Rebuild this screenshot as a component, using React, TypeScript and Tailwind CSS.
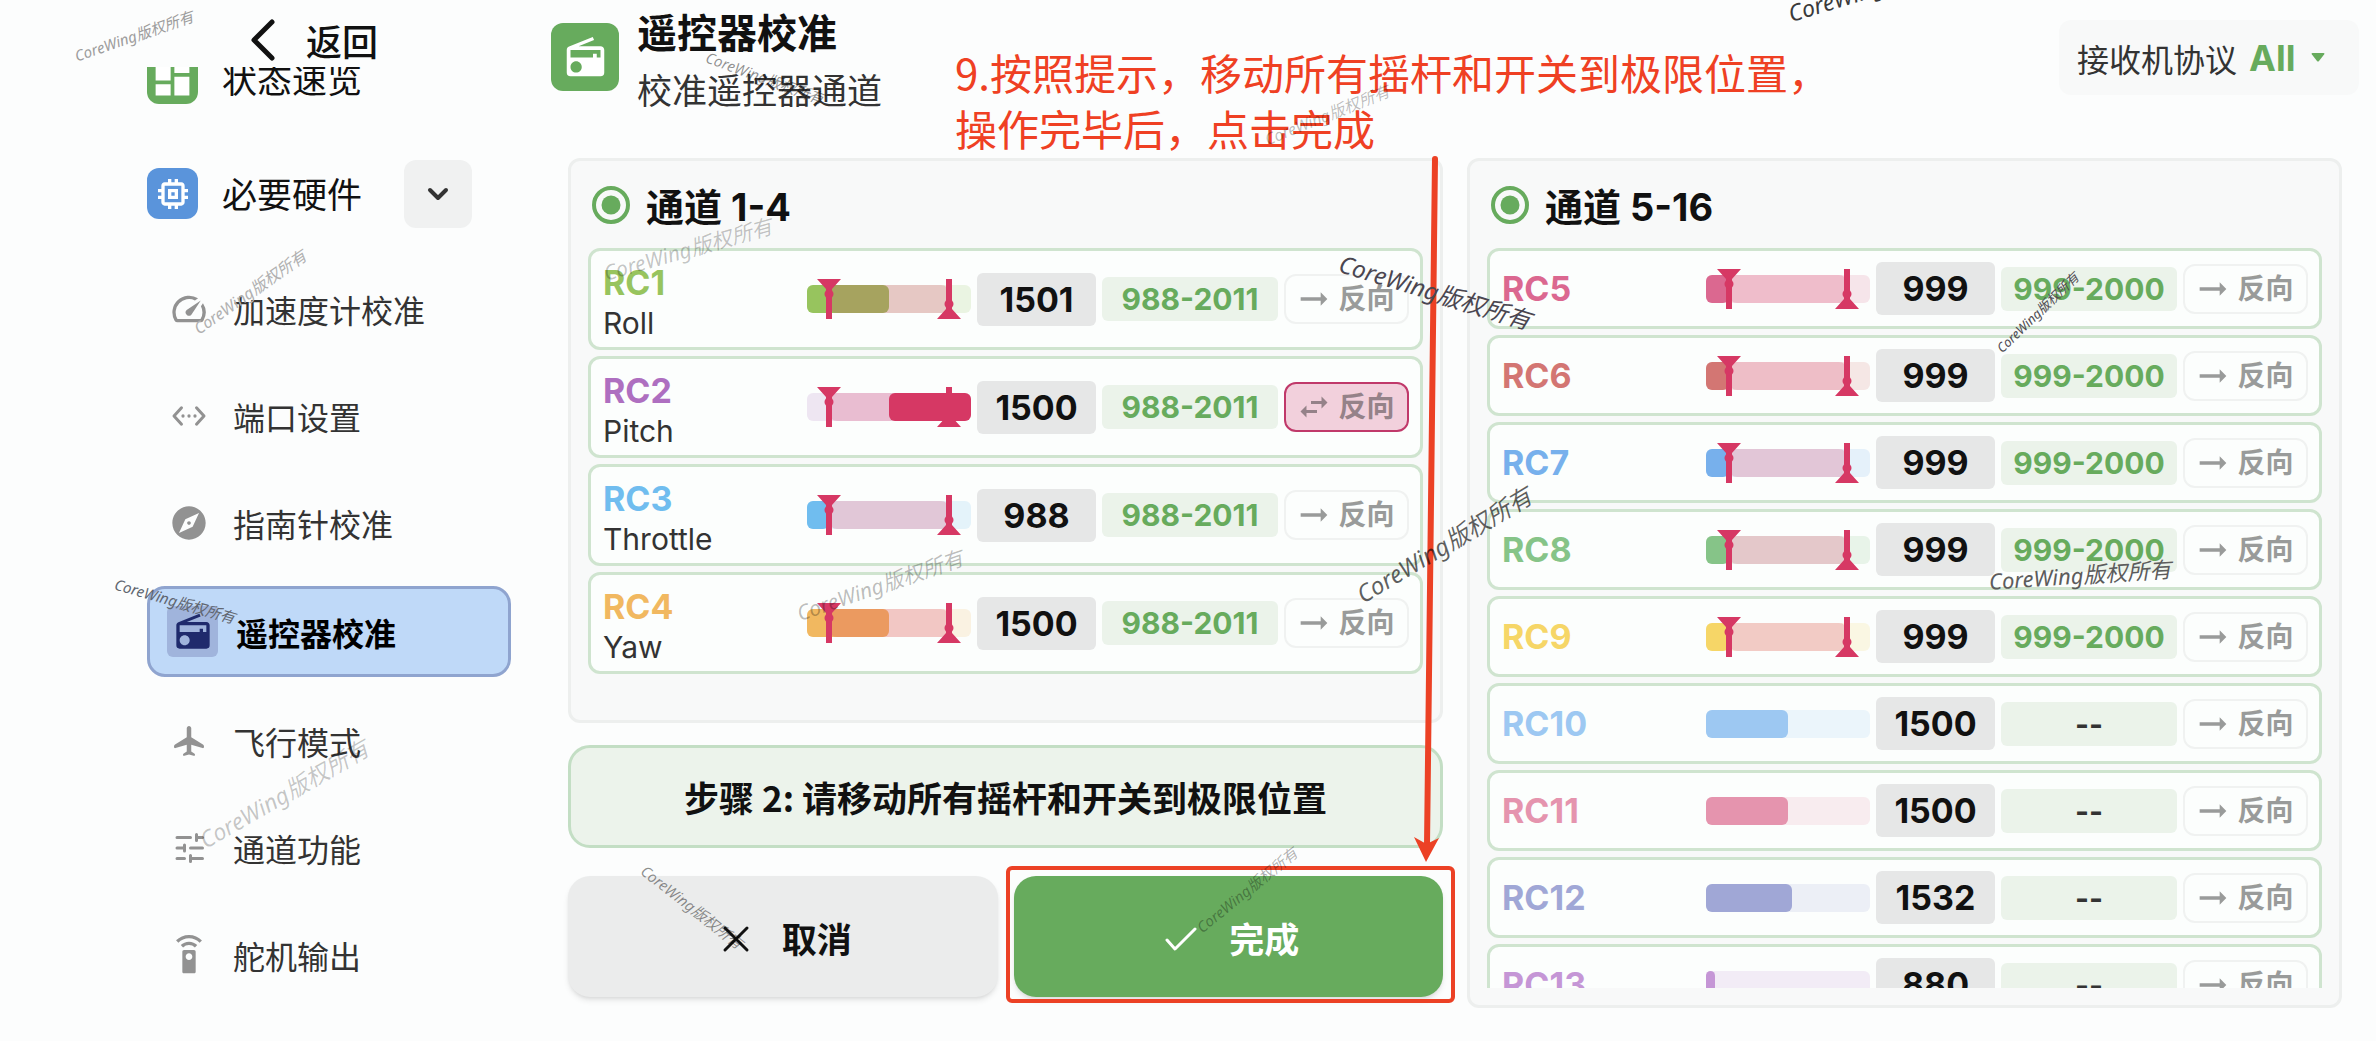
import React, { useState } from 'react';
import {
  MdArrowRightAlt,
  MdDashboard,
  MdExplore,
  MdMemory,
  MdRadio,
  MdSettingsRemote,
  MdSpeed,
  MdSwapHoriz,
} from 'react-icons/md';

const PWM_MIN = 800;
const PWM_MAX = 2200;

const percent = (pwm: number) => ((pwm - PWM_MIN) / (PWM_MAX - PWM_MIN)) * 100;

interface Channel {
  name: string;
  role?: string;
  value: number;
  min?: number;
  max?: number;
  reversed?: boolean;
  color: string;
}

const mainChannels: Channel[] = [
  { name: 'RC1', role: 'Roll', value: 1501, min: 988, max: 2011, color: '#97c45e' },
  { name: 'RC2', role: 'Pitch', value: 1500, min: 988, max: 2011, reversed: true, color: '#ae6fc0' },
  { name: 'RC3', role: 'Throttle', value: 988, min: 988, max: 2011, color: '#70bdef' },
  { name: 'RC4', role: 'Yaw', value: 1500, min: 988, max: 2011, color: '#f1b860' },
];

const auxChannels: Channel[] = [
  { name: 'RC5', value: 999, min: 999, max: 2000, color: '#db6890' },
  { name: 'RC6', value: 999, min: 999, max: 2000, color: '#d37673' },
  { name: 'RC7', value: 999, min: 999, max: 2000, color: '#77b0ec' },
  { name: 'RC8', value: 999, min: 999, max: 2000, color: '#86c488' },
  { name: 'RC9', value: 999, min: 999, max: 2000, color: '#f6d667' },
  { name: 'RC10', value: 1500, color: '#9dc8f2' },
  { name: 'RC11', value: 1500, color: '#e594ae' },
  { name: 'RC12', value: 1532, color: '#a0a7d6' },
  { name: 'RC13', value: 880, color: '#c596d6' },
];

const PortIcon = () => (
  <svg viewBox="0 0 24 24" className="size-9" fill="none" stroke="currentColor" strokeWidth={2} strokeLinecap="round" strokeLinejoin="round">
    <path d="M7 6.500 2 12l5 5.500M17 6.500l5 5.500-5 5.500" />
    <g fill="currentColor" stroke="none">
      <circle cx="8" cy="12" r="1.1" />
      <circle cx="12" cy="12" r="1.1" />
      <circle cx="16" cy="12" r="1.1" />
    </g>
  </svg>
);

const PlaneIcon = () => (
  <svg viewBox="0 0 24 24" className="size-9" fill="currentColor">
    <path d="M22 16v-.4c0-.5-.3-.9-.7-1.200L13.500 9.500V3.500C13.500 2.700 12.800 2 12 2s-1.500.7-1.500 1.500v6L2.700 14.400c-.4.300-.7.700-.7 1.200V16c0 .5.500.9 1 .7L10.500 14.500V19l-2 1.400c-.3.200-.5.500-.5.800 0 .5.400.9.900.7L12 21l3.100.9c.5.200.9-.2.900-.7 0-.3-.2-.6-.5-.8l-2-1.400v-4.500L21 16.700c.5.200 1-.2 1-.7z" />
  </svg>
);

const TuneIcon = () => (
  <svg viewBox="0 0 24 24" className="size-9" fill="none" stroke="currentColor" strokeWidth={2} strokeLinecap="round">
    <path d="M4 5h9M17 3v4M17 5h4M4 12h4M9 10v4M13 12h8M4 19h5M13 17v4M13 19h8" />
  </svg>
);

const menuItems = [
  { label: '加速度计校准', icon: <MdSpeed className="size-10" /> },
  { label: '端口设置', icon: <PortIcon /> },
  { label: '指南针校准', icon: <MdExplore className="size-10" /> },
  { label: '遥控器校准', icon: <MdRadio className="size-10" />, active: true },
  { label: '飞行模式', icon: <PlaneIcon /> },
  { label: '通道功能', icon: <TuneIcon /> },
  { label: '舵机输出', icon: <MdSettingsRemote className="size-10" /> },
];

const watermarks = [
  { x: 134, y: 36, angle: -19, size: 15, color: '#9c9c9c' },
  { x: 250, y: 292, angle: -35, size: 16, color: '#b0b0b0' },
  { x: 175, y: 601, angle: 16, size: 15, color: '#5f6670' },
  { x: 284, y: 794, angle: -30, size: 23, color: '#00000038' },
  { x: 765, y: 78, angle: 20, size: 15, color: '#00000070' },
  { x: 688, y: 250, angle: -16, size: 21, color: '#0000003c' },
  { x: 880, y: 586, angle: -19, size: 21, color: '#00000044' },
  { x: 692, y: 907, angle: 38, size: 15, color: '#00000070' },
  { x: 1247, y: 890, angle: -39, size: 15, color: '#00000050' },
  { x: 1435, y: 292, angle: 17, size: 24, color: '#4a4650' },
  { x: 1444, y: 545, angle: -31, size: 24, color: '#000000a0' },
  { x: 2038, y: 313, angle: -44, size: 13, color: '#4f4b52' },
  { x: 2080, y: 575, angle: -4, size: 22, color: '#5c5c5c' },
  { x: 1880, y: -14, angle: -17, size: 23, color: '#3a3a3a' },
  { x: 1327, y: 115, angle: -22, size: 16, color: '#00000044' },
];

const Marker = ({ at, flip }: { at: number; flip?: boolean }) => (
  <svg
    viewBox="0 0 24 40"
    className={`absolute -top-1.5 h-10 w-6 -translate-x-1/2 text-[#d63864] ${flip ? 'rotate-180' : ''}`}
    style={{ left: `${at}%` }}
    fill="currentColor"
  >
    <path d="M0 0h24L15 10v30H9V10z" />
    <circle cx="12" cy="15" r="4.500" />
  </svg>
);

const ChannelBar = ({ channel }: { channel: Channel }) => {
  const { value, min, max, reversed, color } = channel;
  const fill = percent(value);
  return (
    <div className="relative h-7 w-[164px] shrink-0">
      <div className="absolute inset-0 rounded-md opacity-17" style={{ backgroundColor: color }} />
      {!reversed && (
        <div className="absolute inset-y-0 left-0 rounded-md" style={{ width: `${fill}%`, backgroundColor: color }} />
      )}
      {min !== undefined && max !== undefined && (
        <>
          <div
            className="absolute inset-y-0 rounded-lg bg-[#d63864]/23"
            style={{ left: `${percent(min)}%`, right: `${100 - percent(max)}%` }}
          />
          <Marker at={percent(min)} />
          <Marker at={percent(max)} flip />
        </>
      )}
      {reversed && (
        <div className="absolute inset-y-0 right-0 rounded-md bg-[#d63864]" style={{ width: `${fill}%` }} />
      )}
    </div>
  );
};

const ChannelRow = ({ channel }: { channel: Channel }) => {
  const [reversed, setReversed] = useState(Boolean(channel.reversed));
  const hasRange = channel.min !== undefined;
  return (
    <li
      className={`flex shrink-0 items-center gap-1.5 rounded-xl border-3 border-[#cfe4cf] bg-[#fcfefd] pl-3 pr-[11px] ${
        channel.role ? 'h-[102px]' : 'h-[81px]'
      }`}
    >
      <div className={`flex min-w-0 flex-1 flex-col leading-10 ${channel.role ? 'pt-2' : ''}`}>
        <span className="text-[34px] font-bold" style={{ color: channel.color }}>{channel.name}</span>
        {channel.role && <span className="text-[30px] text-[#333]">{channel.role}</span>}
      </div>
      <ChannelBar channel={{ ...channel, reversed }} />
      <span className="w-[119px] shrink-0 rounded-md bg-[#e6e7e7] text-center text-[34px] font-bold leading-[53px] text-[#111]">
        {channel.value}
      </span>
      <span
        className={`w-44 shrink-0 rounded-md bg-[#ebf3ea] text-center text-[30px] font-bold leading-[44px] ${
          hasRange ? 'text-[#67ab5d]' : 'text-[#333]'
        }`}
      >
        {hasRange ? `${channel.min}-${channel.max}` : '--'}
      </span>
      <button
        type="button"
        aria-pressed={reversed}
        onClick={() => setReversed(!reversed)}
        className={`flex h-[50px] w-[125px] shrink-0 items-center justify-center gap-1 rounded-xl border-2 pr-1 text-[28px] font-bold ${
          reversed ? 'border-[#c0396a] bg-[#f2d0dc] text-[#958289]' : 'border-[#f0f2f1] text-[#999b9a]'
        }`}
      >
        {reversed ? <MdSwapHoriz className="mx-0.5 size-9" /> : <MdArrowRightAlt className="size-10" />}
        反向
      </button>
    </li>
  );
};

const ChannelPanel = ({ title, channels }: { title: string; channels: Channel[] }) => (
  <section className="flex min-h-0 flex-1 flex-col rounded-xl border-3 border-[#edefee] bg-[#f8f9f9] px-[17px] pb-[17px]">
    <h2 className="flex h-[87px] shrink-0 items-center gap-4 pl-1 text-[38px] font-bold text-[#111]">
      <svg viewBox="0 0 38 38" className="size-[38px]" fill="none">
        <circle cx="19" cy="19" r="17" stroke="#67ab5d" strokeWidth={4} />
        <circle cx="19" cy="19" r="9.500" fill="#67ab5d" />
      </svg>
      <span className="pt-1.5">{title}</span>
    </h2>
    <ul className="flex min-h-0 flex-1 flex-col gap-1.5 overflow-hidden">
      {channels.map((channel) => (
        <ChannelRow key={channel.name} channel={channel} />
      ))}
    </ul>
  </section>
);

const Sidebar = () => (
  <aside className="flex w-[551px] shrink-0 flex-col font-['Noto_Sans_CJK_SC',sans-serif]">
    <button type="button" className="flex h-[67px] shrink-0 items-center gap-7 pl-[248px] pt-3 text-[36px] font-medium leading-[52px] text-[#111]">
      <svg viewBox="0 0 30 44" className="h-11 w-[30px]" fill="none" stroke="currentColor" strokeWidth={5} strokeLinecap="round" strokeLinejoin="round">
        <path d="M24 4 6 22l18 18" />
      </svg>
      返回
    </button>

    <nav className="min-h-0 flex-1 overflow-hidden pl-[147px] pr-10">
      {/* list is scrolled a little, the first entry sits half under the back bar */}
      <div className="-mt-[46px]">
        <a href="#status" className="flex h-[115px] items-center gap-6 text-[35px] text-[#111]">
          <span className="flex size-[51px] items-center justify-center rounded-xl bg-[#67ab5d] text-white">
            <MdDashboard className="size-[45px]" />
          </span>
          状态速览
        </a>
        <div className="flex h-[115px] items-center gap-6 text-[35px] text-[#111]">
          <span className="flex size-[51px] items-center justify-center rounded-xl bg-[#5a94db] text-white">
            <MdMemory className="size-10" />
          </span>
          <span>必要硬件</span>
          <button type="button" aria-label="展开" className="ml-[18px] flex size-[68px] items-center justify-center rounded-xl bg-[#f0f1f1] text-[#333]">
            <svg viewBox="0 0 24 16" className="h-4 w-6" fill="none" stroke="currentColor" strokeWidth={4} strokeLinecap="round" strokeLinejoin="round">
              <path d="m4 4 8 8 8-8" />
            </svg>
          </button>
        </div>

        <ul className="pt-1">
          {menuItems.map((item) => (
            <li key={item.label}>
              {item.active ? (
                <a href="#radio" aria-current="page" className="my-2.5 flex h-[91px] items-center gap-[18px] rounded-[18px] border-3 border-[#8fa4cf] bg-[#bfd9f8] pl-[17px] text-[32px] font-bold leading-none text-black">
                  <span className="flex size-[51px] items-center justify-center rounded-md bg-[#a0b4dc] text-[#1f2a6c]">{item.icon}</span>
                  {item.label}
                </a>
              ) : (
                <a href="#menu" className="flex h-[107px] items-center gap-6 pl-[22px] text-[32px] leading-none text-[#333]">
                  <span className="flex w-10 justify-center text-[#929292]">{item.icon}</span>
                  {item.label}
                </a>
              )}
            </li>
          ))}
        </ul>
      </div>
    </nav>
  </aside>
);

const Header = () => (
  <header className="relative flex h-[158px] shrink-0 items-start pr-[17px] font-['Noto_Sans_CJK_SC',sans-serif]">
    <span className="mt-[23px] flex size-[68px] shrink-0 items-center justify-center rounded-xl bg-[#67ab5d] text-white">
      <MdRadio className="size-[45px]" />
    </span>
    <div className="ml-[18px] leading-[58px] text-[#111]">
      <h1 className="pt-0.5 text-[40px] font-bold">遥控器校准</h1>
      <p className="text-[35px] text-[#333]">校准遥控器通道</p>
    </div>
    <p className="absolute left-[404px] top-11 whitespace-nowrap text-[42px] leading-14 text-[#ef4023]">
      9.按照提示，移动所有摇杆和开关到极限位置，
      <br />
      操作完毕后，点击完成
    </p>
    <div className="ml-auto mt-5 flex h-[75px] w-[300px] items-center gap-3 rounded-xl bg-[#f8f9f9] pl-[18px]">
      <label htmlFor="protocol" className="text-[32px] text-[#333]">接收机协议</label>
      <select id="protocol" className="field-sizing-content appearance-none bg-transparent font-['Inter',sans-serif] text-[36px] font-bold text-[#67ab5d]">
        <option>All</option>
      </select>
      <svg viewBox="0 0 14 9" className="pointer-events-none ml-1 h-[9px] w-3.5" fill="#67ab5d">
        <path d="M1.500 0h11q1.500 0 .6 1.400L8 8q-1 1.200-2 0L.9 1.400Q0 0 1.500 0z" />
      </svg>
    </div>
  </header>
);

export default function App() {
  return (
    <div className="relative flex h-screen overflow-hidden bg-[#fcfdfd] font-['Inter','Noto_Sans_CJK_SC',sans-serif]">
      <Sidebar />

      <main className="flex min-w-0 flex-1 flex-col">
        <Header />
        <div className="flex min-h-0 flex-1 gap-6 pb-[33px] pl-[17px] pr-[34px]">
          <div className="relative flex min-w-0 flex-1 flex-col pb-[11px]">
            <ChannelPanel title="通道 1-4" channels={mainChannels} />
            <p className="mt-[22px] rounded-[22px] border-3 border-[#c3dec4] bg-[#ecf3eb] text-center font-['Noto_Sans_CJK_SC',sans-serif] text-[35px] font-bold leading-[97px] text-[#111]">
              步骤 2: 请移动所有摇杆和开关到极限位置
            </p>
            <div className="mt-7 grid grid-cols-2 gap-4 font-['Noto_Sans_CJK_SC',sans-serif] text-[35px] font-bold">
              <button type="button" className="flex h-[121px] items-center justify-center gap-8 rounded-[22px] bg-[#ebecec] pl-2 pt-1 text-[#111] shadow-md">
                <svg viewBox="0 0 28 28" className="size-7" fill="none" stroke="currentColor" strokeWidth={3} strokeLinecap="round">
                  <path d="m3 3 22 22M25 3 3 25" />
                </svg>
                取消
              </button>
              <div className="relative flex">
                <button type="button" className="flex h-[121px] flex-1 items-center justify-center gap-8 rounded-[22px] bg-[#67ab5d] pl-2 pt-1 text-white shadow-md">
                  <svg viewBox="0 0 32 24" className="h-6 w-8" fill="none" stroke="currentColor" strokeWidth={3} strokeLinecap="round" strokeLinejoin="round">
                    <path d="m2 13 8 9L30 2" />
                  </svg>
                  完成
                </button>
                <span className="pointer-events-none absolute -bottom-1.5 -left-2 -right-3 -top-2.5 rounded-md border-4 border-[#ec4125]" />
              </div>
            </div>
            <svg viewBox="0 0 30 708" className="pointer-events-none absolute -top-0.5 right-0 h-[708px] w-[30px]" fill="#ec4125">
              <path d="M22 3 14 690" stroke="#ec4125" strokeWidth={6} strokeLinecap="round" />
              <path d="M13 706 1 681l12.500 7L26 682z" />
            </svg>
          </div>

          <div className="flex min-w-0 flex-1">
            <ChannelPanel title="通道 5-16" channels={auxChannels} />
          </div>
        </div>
      </main>

      <div className="pointer-events-none absolute inset-0 overflow-hidden font-['Noto_Sans','Noto_Sans_CJK_SC',sans-serif] italic">
        {watermarks.map((mark) => (
          <span
            key={`${mark.x}-${mark.y}`}
            className="absolute -translate-x-1/2 -translate-y-1/2 whitespace-nowrap"
            style={{ left: mark.x, top: mark.y, rotate: `${mark.angle}deg`, fontSize: mark.size, color: mark.color }}
          >
            CoreWing版权所有
          </span>
        ))}
      </div>
    </div>
  );
}
